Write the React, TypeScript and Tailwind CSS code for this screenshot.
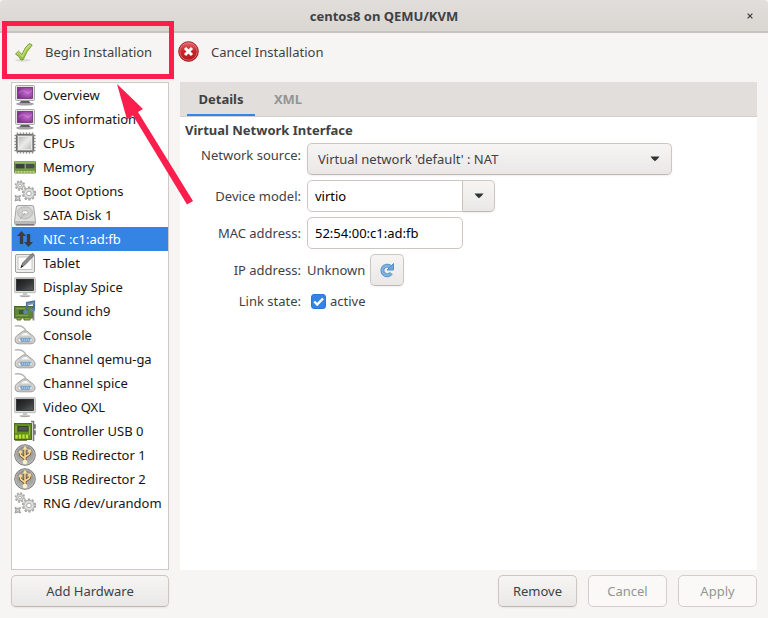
import { useState, type ReactNode } from 'react';

type IconName =
  | 'monitor' | 'cpu' | 'memory' | 'gears' | 'disk' | 'network' | 'tablet'
  | 'display' | 'sound' | 'serial' | 'controller' | 'usb';

const hardware: { label: string; icon: IconName }[] = [
  { label: 'Overview', icon: 'monitor' },
  { label: 'OS information', icon: 'monitor' },
  { label: 'CPUs', icon: 'cpu' },
  { label: 'Memory', icon: 'memory' },
  { label: 'Boot Options', icon: 'gears' },
  { label: 'SATA Disk 1', icon: 'disk' },
  { label: 'NIC :c1:ad:fb', icon: 'network' },
  { label: 'Tablet', icon: 'tablet' },
  { label: 'Display Spice', icon: 'display' },
  { label: 'Sound ich9', icon: 'sound' },
  { label: 'Console', icon: 'serial' },
  { label: 'Channel qemu-ga', icon: 'serial' },
  { label: 'Channel spice', icon: 'serial' },
  { label: 'Video QXL', icon: 'display' },
  { label: 'Controller USB 0', icon: 'controller' },
  { label: 'USB Redirector 1', icon: 'usb' },
  { label: 'USB Redirector 2', icon: 'usb' },
  { label: 'RNG /dev/urandom', icon: 'gears' },
];

function Gradients() {
  return (
    <svg width="0" height="0" className="absolute" aria-hidden="true">
      <defs>
        <radialGradient id="purple" cx=".65" cy=".45" r=".75">
          <stop offset="0" stopColor="#c66fd0" />
          <stop offset="1" stopColor="#7a2a88" />
        </radialGradient>
        <linearGradient id="silver" x1="0" y1="0" x2="1" y2="1">
          <stop offset="0" stopColor="#b9b9b8" />
          <stop offset=".5" stopColor="#ebebea" />
          <stop offset="1" stopColor="#bcbcba" />
        </linearGradient>
        <linearGradient id="dark" x1="0" y1="0" x2="1" y2="1">
          <stop offset="0" stopColor="#18191a" />
          <stop offset=".5" stopColor="#303233" />
          <stop offset="1" stopColor="#5a5d5f" />
        </linearGradient>
        <linearGradient id="disc" x1="0" y1="0" x2="0" y2="1">
          <stop offset="0" stopColor="#8d8d8b" />
          <stop offset="1" stopColor="#b3b3b1" />
        </linearGradient>
        <linearGradient id="red" x1="0" y1="0" x2="0" y2="1">
          <stop offset="0" stopColor="#e0696b" />
          <stop offset=".5" stopColor="#c8252b" />
          <stop offset="1" stopColor="#b3151b" />
        </linearGradient>
        <linearGradient id="green" x1="0" y1="0" x2="0" y2="1">
          <stop offset="0" stopColor="#b5d95c" />
          <stop offset="1" stopColor="#94bb3c" />
        </linearGradient>
      </defs>
    </svg>
  );
}

const drawings: Record<IconName, ReactNode> = {
  monitor: (
    <>
      <ellipse cx="11" cy="20" rx="9" ry="1.6" fill="#a2a2a0" />
      <path d="M7 17h8l1.500 2H5.500z" fill="#5e6062" />
      <rect x="1.500" y="1.500" width="19" height="15" rx="1" fill="#e2e2e0" stroke="#a9a9a7" />
      <rect x="3.500" y="3.500" width="15" height="11" fill="url(#purple)" stroke="#6a3072" strokeWidth=".8" />
      <path d="M5 9q4-4 7-1t6-2" stroke="#dba5df" strokeWidth=".8" fill="none" opacity=".6" />
    </>
  ),
  cpu: (
    <>
      <path d="M3.500 .5v21M6.500 .5v21M9.500 .5v21M12.500 .5v21M15.500 .5v21M18.500 .5v21M.5 3.500h21M.5 6.500h21M.5 9.500h21M.5 12.500h21M.5 15.500h21M.5 18.500h21" stroke="#8c8c8a" strokeWidth="1.500" />
      <rect x="2.500" y="2.500" width="17" height="17" rx="1" fill="#999" stroke="#70706f" />
      <rect x="4.500" y="4.500" width="13" height="13" fill="url(#silver)" stroke="#f3f3f2" strokeWidth=".8" />
    </>
  ),
  memory: (
    <>
      <rect x=".5" y="5.500" width="21" height="11.500" rx=".6" fill="#7fa84b" stroke="#6a8a48" />
      <path d="M1 6h20" stroke="#a9c687" />
      <rect x="1.500" y="8" width="9" height="4.500" fill="#3b3f3e" />
      <rect x="12" y="8" width="8.500" height="4.500" fill="#4a4e4c" />
      <path d="M1 14h20" stroke="#6c9a3c" strokeWidth="1.500" />
      <path d="M1 16h20" stroke="#d9dc98" strokeWidth="1.600" strokeDasharray="1 .5" />
    </>
  ),
  gears: (
    <g fill="none" stroke="#a6a6a5">
      <circle cx="6" cy="5.500" r="4.400" strokeWidth="1.700" strokeDasharray="2 1.400" />
      <circle cx="6" cy="5.500" r="3.400" fill="#dededd" strokeWidth=".9" />
      <circle cx="6" cy="5.500" r="1.400" fill="#fff" strokeWidth=".9" />
      <circle cx="15" cy="13.500" r="6.200" strokeWidth="1.800" strokeDasharray="2.400 1.500" />
      <circle cx="15" cy="13.500" r="5.200" fill="#dededd" strokeWidth=".9" />
      <circle cx="15" cy="13.500" r="2.300" fill="#fff" strokeWidth=".9" />
      <path d="M1 15.500l2 .8h1.500l2-.8-.8 2v1.500l.8 2-2-.8H3l-2 .8.800-2V17.500z" fill="#c8c8c7" stroke="#999" />
      <circle cx="3.750" cy="18.200" r=".9" fill="#fff" strokeWidth=".5" />
    </g>
  ),
  disk: (
    <>
      <path d="M4 1.500h14q1.500 0 1.700 1.500l1.700 13.500v3q0 1.500-1.500 1.500H2.100Q.600 21 .600 19.500v-3L2.300 3Q2.500 1.500 4 1.500z" fill="#e0e0df" stroke="#a3a3a1" />
      <ellipse cx="11" cy="8.800" rx="7.500" ry="6" fill="#cfcfcd" stroke="#bababa" />
      <ellipse cx="11" cy="8.500" rx="3" ry="2.100" fill="#f2f2f1" stroke="#aaa" strokeWidth=".7" />
      <path d="M11 9l-5 6" stroke="#aaa" />
      <path d="M1 17h20v3q0 1-1 1H2q-1 0-1-1z" fill="#b8b8b6" />
      <path d="M2 20.800h18" stroke="#686866" strokeWidth="1.200" />
    </>
  ),
  network: (
    <>
      <path d="M7.500 3l4.500 5H9.200v8H5.800V8H3z" fill="#3a3d42" />
      <path d="M14.500 19l4.500-5h-2.800V6h-3.400v8H10z" fill="#3a3d42" />
    </>
  ),
  tablet: (
    <>
      <rect x="1.500" y="2.500" width="19" height="18" rx="1.500" fill="#ededec" stroke="#a0a09e" />
      <rect x="4" y="5" width="14" height="12.500" fill="#fff" stroke="#c4c4c2" />
      <path d="M7 15.500l1.600-4.500L17.500 2q2-1 2.200.600.2 1-.800 2L10.200 13.500z" fill="#8c8e8f" stroke="#5c5e5f" strokeWidth=".8" />
      <path d="M6.500 16l1-3 1.700 1.400z" fill="#222" />
    </>
  ),
  display: (
    <>
      <ellipse cx="11" cy="20" rx="5.500" ry="1.200" fill="#c4c4c2" />
      <path d="M9 16h4v3.500H9z" fill="#c8c8c6" />
      <rect x=".7" y="1.700" width="20.600" height="15" rx=".8" fill="#dededc" stroke="#b8b8b6" />
      <rect x="2.500" y="3.200" width="17" height="11.300" fill="url(#dark)" stroke="#1b1c1d" strokeWidth=".7" />
      <path d="M7 20.500h8" stroke="#aaa" />
    </>
  ),
  sound: (
    <>
      <rect x=".5" y="6.500" width="18" height="11.500" fill="#5f8735" stroke="#4a6c2a" />
      <path d="M3 18v2h4v-2M10 18v2h6v-2" fill="#9aa637" stroke="#5d7530" />
      <rect x="5" y="10" width="5" height="4" fill="#3f5a2a" />
      <path d="M2 8.500h9M2 15.500h12" stroke="#87ad55" strokeWidth=".8" />
      <path d="M13 12V3l7-1.500V10" fill="none" stroke="#4d7299" strokeWidth="2.200" />
      <path d="M13 4.500L20 3" stroke="#7596b8" strokeWidth="2" />
      <ellipse cx="11.500" cy="12" rx="2.500" ry="2" fill="#5f84a9" />
      <ellipse cx="18.500" cy="10.200" rx="2.500" ry="2" fill="#5f84a9" />
      <path d="M19.500 12v8.500" stroke="#8b8d89" strokeWidth="1.800" />
    </>
  ),
  serial: (
    <>
      <path d="M1 2q6-1 9 2 3 2.500 0 4" fill="none" stroke="#b4b4b3" strokeWidth="1.500" />
      <path d="M2.500 12L9 7h4l6.500 5.500q2 2 1.500 4.500-1 2.800-4 2.800H5Q1 19.800 1 16q0-2.500 1.500-4z" fill="#d4d4d2" stroke="#9f9f9d" />
      <path d="M5 12l5-3.500h2.500l5 3.500z" fill="#f6f6f5" stroke="#bcbcba" strokeWidth=".7" />
      <path d="M5 14h12q2.500 1.500.5 4H4.800q-2.300-2 .2-4z" fill="#f1f1f0" stroke="#aaa" strokeWidth=".8" />
      <path d="M6.200 14.600h10.200l-1 3H7.400z" fill="#7fa9d2" stroke="#6691bb" strokeWidth=".6" />
      <path d="M8 16h7" stroke="#c9ddf0" strokeWidth=".9" strokeDasharray="1 1" />
    </>
  ),
  controller: (
    <>
      <path d="M17 1.500h2.500V19M19 5h2v3h-2M19 11h2v3h-2M19.500 18v3" fill="none" stroke="#777975" strokeWidth="1.600" />
      <rect x=".5" y="3.500" width="17" height="16" fill="#668f22" stroke="#4f7019" />
      <rect x="4" y="6.500" width="10" height="4.500" fill="#4d565b" stroke="#37471f" />
      <path d="M2 6v7M15.500 6v9" stroke="#9ab64e" />
      <path d="M2.500 18.500V15M6 18.500V14.500M9.500 18.500V14.500M13 18.500V14.500" stroke="#bfe42d" strokeWidth="2.300" />
      <path d="M1 20h12" stroke="#42601b" strokeWidth="1.500" />
    </>
  ),
  usb: (
    <>
      <circle cx="11" cy="11" r="10.300" fill="url(#disc)" stroke="#7d7d7b" />
      <circle cx="11" cy="11" r="9.300" fill="none" stroke="#c7c7c5" strokeWidth=".7" />
      <path d="M11 4v14M11 14.500L6.500 11V7.500M11 13l4.500-3V6.500" fill="none" stroke="#5c4522" strokeWidth="3" />
      <path d="M11 4v14M11 14.500L6.500 11V7.500M11 13l4.500-3V6.500" fill="none" stroke="#f9d596" strokeWidth="1.600" />
      <path d="M11 1.800l2.600 4H8.400z" fill="#ffdd9c" />
      <circle cx="11" cy="18" r="2.300" fill="#fff0ce" />
      <circle cx="6.500" cy="8" r="1.700" fill="#f9d596" />
      <rect x="14" y="5.500" width="3" height="3" fill="#f9d596" />
    </>
  ),
};

function HardwareIcon({ name }: { name: IconName }) {
  return (
    <svg viewBox="0 0 22 22" className="size-[22px] shrink-0" aria-hidden="true">
      {drawings[name]}
    </svg>
  );
}

function CheckMark() {
  return (
    <svg viewBox="0 0 20 20" className="size-5 shrink-0" aria-hidden="true">
      <ellipse cx="9" cy="18.300" rx="8" ry="1.500" fill="#deddda" />
      <path d="M1.500 12l3-2.800 3.400 3.300Q11 5 15.200 1.500l3 1.500Q12.500 9 9 18H7Q5 14 1.500 12z" fill="url(#green)" stroke="#7d9d40" strokeLinejoin="round" />
      <path d="M3.300 11.700l1.300-1 3.700 4Q11.500 6 15.500 2.900" fill="none" stroke="#d3eb92" strokeWidth=".9" />
    </svg>
  );
}

function CancelMark() {
  return (
    <svg viewBox="0 0 21 21" className="size-[21px] shrink-0" aria-hidden="true">
      <circle cx="10.500" cy="10.500" r="9.800" fill="url(#red)" stroke="#a3151b" />
      <circle cx="10.500" cy="10.500" r="8.700" fill="none" stroke="#e78385" strokeWidth=".7" />
      <path d="M7 7l7 7M14 7l-7 7" stroke="#fff" strokeWidth="3" />
    </svg>
  );
}

function Caret({ className }: { className: string }) {
  return (
    <svg viewBox="0 0 10 6" className={`h-[6px] w-[10px] ${className}`} aria-hidden="true">
      <path d="M.5.500h9Q7.500 3.500 5 5.300 2.500 3.500.5.500z" fill="#2e3436" />
    </svg>
  );
}

const raised =
  'border border-[#cdc7c2] border-b-[#bfb8b1] bg-linear-to-b from-[#f6f5f4] to-[#e9e8e6] shadow-[0_1px_2px_rgba(0,0,0,0.07)]';
const footerButton = 'h-8 w-[79px] rounded-[5px]';
const entry = 'h-8 w-[156px] border border-[#cdc7c2] bg-white px-[7px] text-black outline-none';

export default function App() {
  const [selected, setSelected] = useState(6);
  const [active, setActive] = useState(true);

  return (
    <div className="relative flex min-h-screen flex-col bg-[#f6f5f4] font-['Noto_Sans','Open_Sans',sans-serif] text-[13px] leading-5 text-[#3d4244]">
      <Gradients />
      <header className="flex h-[33px] items-center rounded-t-[4px] border-b-2 border-[#c9c4c0] bg-linear-to-b from-[#e1dedb] to-[#dad6d2] px-3">
        <span className="w-3" />
        <h1 className="flex-1 text-center font-bold">centos8 on QEMU/KVM</h1>
        <button type="button" aria-label="Close" className="flex w-3 justify-center">
          <svg viewBox="0 0 6 6" className="size-[6px]" aria-hidden="true">
            <path d="M.6.600l4.800 4.800M5.400.600L.6 5.400" stroke="#3d4244" strokeWidth="1.300" />
          </svg>
        </button>
      </header>

      <div className="flex h-[49px] items-center pb-3 pl-[14px]">
        <button type="button" className="flex min-w-[164px] items-center gap-[11px]">
          <CheckMark />
          Begin Installation
        </button>
        <button type="button" className="flex items-center gap-3">
          <CancelMark />
          Cancel Installation
        </button>
      </div>

      <main className="flex flex-1 gap-[11px] px-[11px] pb-[11px]">
        <aside className="flex w-[158px] shrink-0 flex-col gap-[5px]">
          <ul className="flex-1 border border-[#cfcac6] bg-white">
            {hardware.map((item, index) => (
              <li key={item.label}>
                <button
                  type="button"
                  onClick={() => setSelected(index)}
                  className={`flex h-6 w-full items-center gap-[7px] pl-[2px] text-left whitespace-nowrap ${
                    index === selected ? 'bg-[#3584e4] text-white' : 'text-[#151515]'
                  }`}
                >
                  <HardwareIcon name={item.icon} />
                  {item.label}
                </button>
              </li>
            ))}
          </ul>
          <button type="button" className={`h-8 rounded-[5px] ${raised}`}>
            Add Hardware
          </button>
        </aside>

        <div className="flex min-w-0 flex-1 flex-col gap-[5px]">
          <section className="flex-1 bg-white">
            <div role="tablist" className="flex h-[35px] border-b border-[#d5d0cc] bg-[#e1dedb] pl-[7px] font-bold">
              <button type="button" role="tab" aria-selected="true" className="w-[68px] border-y-2 border-t-transparent border-b-[#3584e4]">
                Details
              </button>
              <button type="button" role="tab" aria-selected="false" className="w-[66px] text-[#929595]">
                XML
              </button>
            </div>
            <form className="px-[5px] pt-[3px]" onSubmit={(event) => event.preventDefault()}>
              <h2 className="font-bold">Virtual Network Interface</h2>
              <div className="mt-[3px] grid grid-cols-[116px_1fr] items-center gap-x-[6px] gap-y-[5px]">
                <label htmlFor="source" className="self-start text-right leading-6">Network source:</label>
                <div className="relative w-[365px] max-w-full">
                  <select id="source" className={`h-8 w-full appearance-none rounded-[5px] pl-[10px] ${raised}`}>
                    <option>Virtual network 'default' : NAT</option>
                  </select>
                  <Caret className="pointer-events-none absolute top-[13px] right-3" />
                </div>

                <label htmlFor="model" className="text-right">Device model:</label>
                <div className="flex">
                  <input id="model" defaultValue="virtio" className={`rounded-l-[5px] ${entry}`} />
                  <button type="button" aria-label="Show device models" className={`flex h-8 w-8 items-center justify-center rounded-r-[5px] border-l-0 ${raised}`}>
                    <Caret className="" />
                  </button>
                </div>

                <label htmlFor="mac" className="text-right">MAC address:</label>
                <input id="mac" defaultValue="52:54:00:c1:ad:fb" className={`rounded-[5px] ${entry}`} />

                <span className="text-right">IP address:</span>
                <div className="flex items-center gap-[5px]">
                  <span>Unknown</span>
                  <button type="button" aria-label="Refresh IP address" className={`flex h-8 w-[34px] items-center justify-center rounded-[5px] ${raised}`}>
                    <svg viewBox="0 0 16 16" className="size-4" aria-hidden="true">
                      <path d="M12.200 11.200A4.800 4.800 0 1 1 11 4.500" fill="none" stroke="#5590ca" strokeWidth="4" />
                      <path d="M14.500 1.500v6.500H8z" fill="#6fa5d8" stroke="#5590ca" strokeLinejoin="round" />
                      <path d="M12 11.400A4.800 4.800 0 1 1 11 4.500" fill="none" stroke="#7eb1df" strokeWidth="2.400" />
                    </svg>
                  </button>
                </div>

                <span className="text-right">Link state:</span>
                <label className="flex items-center gap-1 pl-1">
                  <span className="relative size-[15px]">
                    <input
                      type="checkbox"
                      checked={active}
                      onChange={() => setActive(!active)}
                      className="block size-[15px] appearance-none rounded-[3px] border border-[#2a77d8] bg-white checked:bg-[#3584e4]"
                    />
                    {active && (
                      <svg viewBox="0 0 15 15" className="pointer-events-none absolute inset-0" aria-hidden="true">
                        <path d="M3.200 7.500l3 3 5.800-6" fill="none" stroke="#fff" strokeWidth="2.400" />
                      </svg>
                    )}
                  </span>
                  active
                </label>
              </div>
            </form>
          </section>
          <div className="flex justify-end gap-[11px]">
            <button type="button" className={`${footerButton} ${raised}`}>Remove</button>
            <button type="button" disabled className={`${footerButton} border border-[#d3cecb] bg-[#faf9f8] text-[#929595]`}>Cancel</button>
            <button type="button" disabled className={`${footerButton} border border-[#d3cecb] bg-[#faf9f8] text-[#929595]`}>Apply</button>
          </div>
        </div>
      </main>

      <svg viewBox="0 0 200 210" className="pointer-events-none absolute top-0 left-0 h-[210px] w-[200px]" aria-hidden="true">
        <rect x="4.500" y="23.500" width="167" height="53" fill="none" stroke="#fc1e4c" strokeWidth="5" />
        <path d="M117 84l26 25-5 3 55 89-6 3.500-54-89-6 4z" fill="#fc1e4c" />
      </svg>
    </div>
  );
}
